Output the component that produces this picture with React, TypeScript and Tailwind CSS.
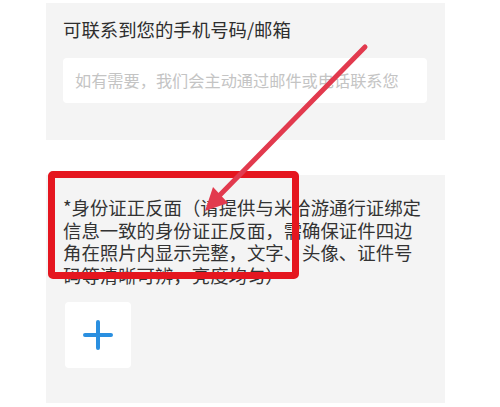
import React from "react";

const cjk = { fontFamily: '"Noto Sans CJK SC", "Noto Sans", sans-serif' };

function ContactCard() {
  return (
    <div className="bg-[#f4f4f4] pt-[14px] pb-[37px] pl-[17px] pr-[18px]">
      <h3 className="text-[18.4px] leading-[24px] text-[#2e2e2e]">
        可联系到您的手机号码/邮箱
      </h3>
      <div className="mt-[17px] h-[45px] rounded-[4px] bg-white pl-[12px] flex items-center">
        <span className="text-[16.2px] text-[#c4c4c4]">
          如有需要，我们会主动通过邮件或电话联系您
        </span>
      </div>
    </div>
  );
}

function IdCard() {
  return (
    <div className="bg-[#f4f4f4] pt-[21px] pb-[35px] pl-[17px] pr-[18px]">
      <p className="text-[18.4px] leading-[22.5px] text-[#333333]">
        *身份证正反面（请提供与米哈游通行证绑定信息一致的身份证正反面，需确保证件四边角在照片内显示完整，文字、头像、证件号码等清晰可辨，亮度均匀）
      </p>
      <div className="mt-[16px] ml-[2px] w-[66px] h-[66px] rounded-[4px] bg-white flex items-center justify-center">
        <svg width="32" height="32" viewBox="0 0 32 32">
          <path
            d="M16 3v26M3 16h26"
            stroke="#2a8fe0"
            strokeWidth="4"
            strokeLinecap="round"
          />
        </svg>
      </div>
    </div>
  );
}

export default function App() {
  return (
    <div className="relative w-[500px] h-[407px] bg-white overflow-hidden" style={cjk}>
      <div className="ml-[46px] w-[399px] pt-[3px] flex flex-col gap-[35px]">
        <ContactCard />
        <IdCard />
      </div>

      {/* red highlight frame */}
      <div className="absolute left-[48px] top-[171px] w-[251px] h-[108px] border-[7px] border-[#e5161f] rounded-[5px]" />

      {/* arrow annotation */}
      <svg className="absolute inset-0" width="500" height="407" viewBox="0 0 500 407">
        <line
          x1="365"
          y1="47"
          x2="216"
          y2="199"
          stroke="#e23a4e"
          strokeWidth="5"
          strokeLinecap="round"
        />
        <polygon points="205,211 228,203 213,187" fill="#e23a4e" />
      </svg>
    </div>
  );
}
